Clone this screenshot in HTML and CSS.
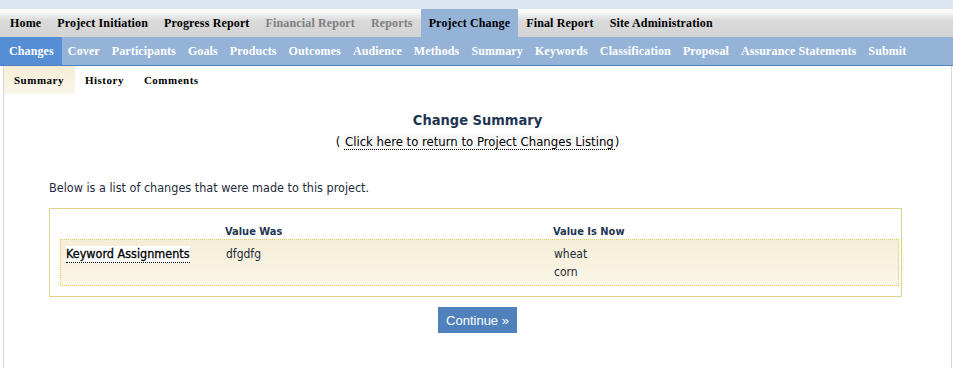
FILE: index.html
```html
<!DOCTYPE html>
<html>
<head>
<meta charset="utf-8">
<link rel="stylesheet" href="styles.css">
</head>
<body>
<div class="band"></div>
<nav class="topnav">
  <a class="tn">Home</a>
  <a class="tn">Project Initiation</a>
  <a class="tn">Progress Report</a>
  <a class="tn dim">Financial Report</a>
  <a class="tn dim">Reports</a>
  <a class="tn active">Project Change</a>
  <a class="tn">Final Report</a>
  <a class="tn">Site Administration</a>
</nav>
<nav class="subnav">
  <a class="sn active">Changes</a>
  <a class="sn">Cover</a>
  <a class="sn">Participants</a>
  <a class="sn">Goals</a>
  <a class="sn">Products</a>
  <a class="sn">Outcomes</a>
  <a class="sn">Audience</a>
  <a class="sn">Methods</a>
  <a class="sn">Summary</a>
  <a class="sn">Keywords</a>
  <a class="sn">Classification</a>
  <a class="sn">Proposal</a>
  <a class="sn">Assurance Statements</a>
  <a class="sn">Submit</a>
</nav>
<div class="page">
  <div class="tabs">
    <a class="tab active">Summary</a>
    <a class="tab">History</a>
    <a class="tab">Comments</a>
  </div>
  <h1 class="title">Change Summary</h1>
  <p class="back">( <a class="backlink">Click here to return to Project Changes Listing</a>)</p>
  <p class="intro">Below is a list of changes that were made to this project.</p>
  <div class="box">
    <div class="grid head">
      <span></span>
      <span>Value Was</span>
      <span>Value Is Now</span>
    </div>
    <div class="grid row">
      <span><span class="field">Keyword Assignments</span></span>
      <span>dfgdfg</span>
      <span class="vals"><span>wheat</span><span>corn</span></span>
    </div>
  </div>
  <div class="actions">
    <button class="btn">Continue &raquo;</button>
  </div>
</div>
</body>
</html>
```
FILE: styles.css
```css
html, body {
  margin: 0;
  padding: 0;
  background: #ffffff;
}
body {
  font-family: "DejaVu Sans Condensed", "DejaVu Sans", sans-serif;
  font-size: 12px;
  color: #1e2a3a;
}
.band {
  height: 9px;
  background: #dbe5f1;
}
.topnav {
  display: flex;
  height: 28px;
  padding-left: 2px;
  background: linear-gradient(#ffffff 0px, #f4f4f4 4px, #d9d9d9 12px, #d4d4d4 100%);
}
.tn {
  display: flex;
  align-items: center;
  padding: 0 8px;
  font-family: "Liberation Serif", serif;
  font-weight: bold;
  font-size: 12px;
  letter-spacing: 0.15px;
  color: #000000;
}
.tn.dim { color: #7f7f7f; }
.tn.active { background: #95b3d7; }
.subnav {
  display: flex;
  height: 28px;
  background: #95b3d7;
  border-bottom: 1px solid #4f81bd;
}
.sn {
  display: flex;
  align-items: center;
  padding: 0 6px;
  font-family: "Liberation Serif", serif;
  font-weight: bold;
  font-size: 12px;
  letter-spacing: 0.12px;
  color: #ffffff;
}
.sn:first-child { padding-left: 9px; padding-right: 8px; }
.sn.active { background: #558ed5; }
.page {
  margin: 0 1px 0 3px;
  border-left: 1px solid #d9d9d9;
  border-right: 1px solid #d9d9d9;
  padding-bottom: 40px;
}
.tabs {
  display: flex;
  height: 28px;
}
.tab {
  display: flex;
  align-items: center;
  padding: 0 10px 0 10px;
  font-family: "Liberation Serif", serif;
  font-weight: bold;
  font-size: 11px;
  letter-spacing: 0.5px;
  color: #000000;
}
.tab.active {
  padding-right: 11px;
  background: linear-gradient(#f5edd6, #faf6e9);
}
.title {
  margin: 16px 0 0;
  text-align: center;
  font-size: 14.5px;
  font-weight: bold;
  color: #1f3652;
  line-height: 20px;
}
.back {
  margin: 3px 0 0;
  text-align: center;
  font-size: 13px;
  color: #000;
  line-height: 18px;
}
.backlink {
  background: #f7f7f7;
  border-bottom: 1px dotted #000;
  padding: 0 1px;
}
.intro {
  margin: 29px 0 0 45px;
  font-size: 12.5px;
  line-height: 16px;
}
.box {
  box-sizing: border-box;
  margin: 12px 0 0 45px;
  width: 853px;
  border: 1px solid #e0d18c;
  padding: 16px 2px 10px 10px;
}
.grid {
  display: grid;
  grid-template-columns: 160px 328px 1fr;
  padding-left: 5px;
}
.head {
  font-weight: bold;
  font-size: 11px;
  color: #1f3652;
  line-height: 14px;
}
.row {
  border: 1px dotted #e6c65e;
  background: linear-gradient(#f5edd6, #faf6e8);
  padding-top: 5px;
  padding-bottom: 4px;
  font-size: 12px;
  line-height: 18px;
  color: #1e2a3a;
}
.field {
  display: inline-block;
  background: #ffffff;
  color: #000;
  font-size: 12.5px;
  line-height: 16px;
  -webkit-text-stroke: 0.3px #000;
  border-bottom: 1px dotted #000;
}
.vals {
  display: flex;
  flex-direction: column;
}
.actions {
  display: flex;
  justify-content: center;
  margin-top: 10px;
}
.btn {
  font-family: "Liberation Sans", Arial, sans-serif;
  font-size: 13px;
  color: #ffffff;
  background: #4f81bd;
  border: none;
  width: 79px;
  height: 26px;
  padding: 0;
}
```
